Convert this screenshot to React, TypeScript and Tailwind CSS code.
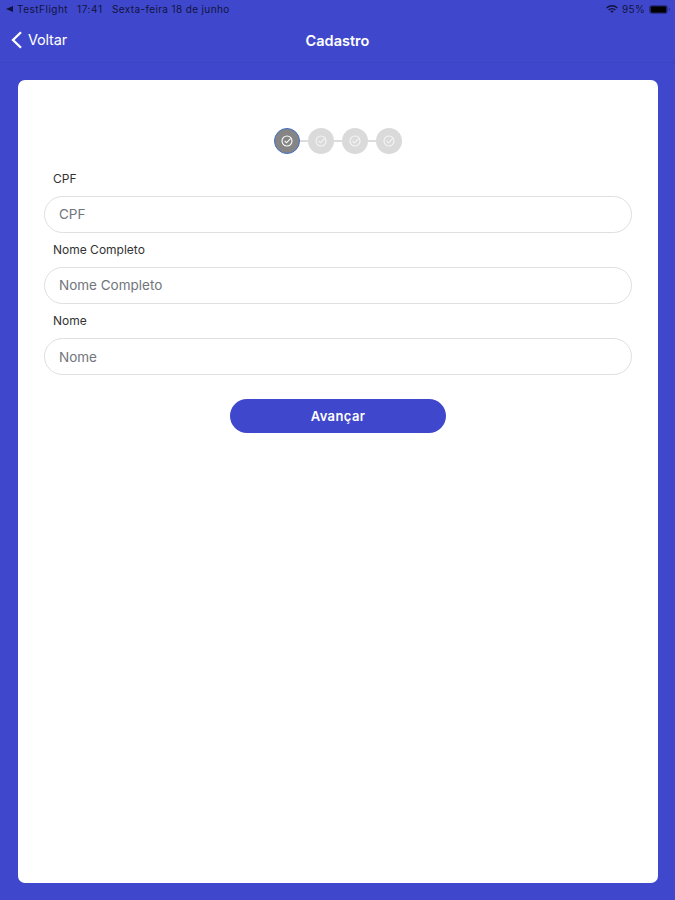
const steps = [
  { id: 1, active: true },
  { id: 2, active: false },
  { id: 3, active: false },
  { id: 4, active: false },
];

const fields = [
  { name: "cpf", label: "CPF" },
  { name: "fullName", label: "Nome Completo" },
  { name: "name", label: "Nome" },
];

function StatusBar() {
  return (
    <div className="flex h-[18px] items-center justify-between pl-[6px] pr-[4px] text-[10px] leading-none text-[#11133f]">
      <div className="flex items-center whitespace-pre">
        <svg className="mr-[4px] h-[6px] w-[7px]" viewBox="0 0 7 6" fill="currentColor">
          <path d="M0 3 7 0v6z" />
        </svg>
        <span className="w-[60px] tracking-[0.5px]">TestFlight</span>
        <span className="w-[35px] tracking-[0.6px]">17:41</span>
        <span className="tracking-[0.37px]">Sexta-feira 18 de junho</span>
      </div>
      <div className="flex items-center">
        <svg className="mr-[4px] h-[8px] w-[12px]" viewBox="0 0 12 8" fill="none" stroke="currentColor" strokeWidth="1.5">
          <path d="M.6 3C3.6.1 8.4.1 11.4 3M2.6 5C4.5 3.2 7.5 3.2 9.4 5" />
          <path d="M4.2 6.1c1-.9 2.6-.9 3.6 0L6 8z" fill="currentColor" stroke="none" />
        </svg>
        <span className="mr-[4px] w-[23px] tracking-[0.3px]">95%</span>
        <svg className="h-[9px] w-[22px]" viewBox="0 0 22 9">
          <rect x=".5" y=".5" width="18" height="8" rx="2" fill="none" stroke="#2b2f89" />
          <rect x="1.5" y="1.3" width="16" height="6.4" rx="1" fill="#000" />
          <path d="M20 3c1.3.4 1.3 2.6 0 3z" fill="#2b2f89" />
        </svg>
      </div>
    </div>
  );
}

function Header() {
  return (
    <header className="grid h-[45px] grid-cols-3 items-center border-b border-[#3c43c3] px-[11px] text-[14.5px] leading-none text-white">
      <button type="button" className="flex items-center gap-[6px]">
        <svg className="h-[18px] w-[11px]" viewBox="0 0 11 18" fill="none" stroke="currentColor" strokeWidth="2.3">
          <path d="M10 1.2 2 9l8 7.8" />
        </svg>
        <span className="pt-px tracking-[-0.2px]">Voltar</span>
      </button>
      <h1 className="pt-[2px] text-center text-[14.5px] font-semibold">Cadastro</h1>
    </header>
  );
}

function CheckIcon() {
  return (
    <svg className="size-[12px]" viewBox="0 0 12 12" fill="none" stroke="currentColor" strokeWidth="1.1">
      <circle cx="6" cy="6" r="5" />
      <path d="m3.6 5.9 1.9 1.9 4-4.2" />
    </svg>
  );
}

function Steps() {
  return (
    <div className="flex items-center justify-center">
      {steps.map((step, i) => (
        <div key={step.id} className="flex items-center">
          {i > 0 && <div className="h-[2px] w-[8px] bg-[#dcdcdc]" />}
          <div
            className={
              step.active
                ? "flex size-[26px] items-center justify-center rounded-full border border-[#416fc0] bg-[#858585] text-white"
                : "flex size-[26px] items-center justify-center rounded-full bg-[#dadada] text-[#f5f5f5]"
            }
          >
            <CheckIcon />
          </div>
        </div>
      ))}
    </div>
  );
}

export default function App() {
  return (
    <div className="flex h-screen flex-col bg-[#3f48cc] font-['Inter',sans-serif]">
      <StatusBar />
      <Header />
      <main className="mb-[17.5px] ml-[18px] mr-[17px] mt-[17px] flex-1 rounded-[7px] bg-white px-[26px] pt-[47.5px]">
        <Steps />
        <form className="mt-[13.5px]">
          {fields.map((field) => (
            <div key={field.name} className="h-[71.3px]">
              <label htmlFor={field.name} className="block h-[28.5px] pl-[9px] pt-[2.5px] text-[12px] leading-[17px] text-[#333]">
                {field.label}
              </label>
              <input
                id={field.name}
                placeholder={field.label}
                className="block h-[37px] w-full rounded-full border border-[#dedfe1] bg-white px-[14px] text-[13.5px] text-[#333] placeholder:text-[#70757b]"
              />
            </div>
          ))}
          <button
            type="button"
            className="mx-auto mt-[18px] flex h-[34.5px] w-[216px] items-center justify-center rounded-full bg-[#3f48cc] pt-px text-[13px] font-semibold tracking-[0.4px] text-white"
          >
            Avançar
          </button>
        </form>
      </main>
    </div>
  );
}
